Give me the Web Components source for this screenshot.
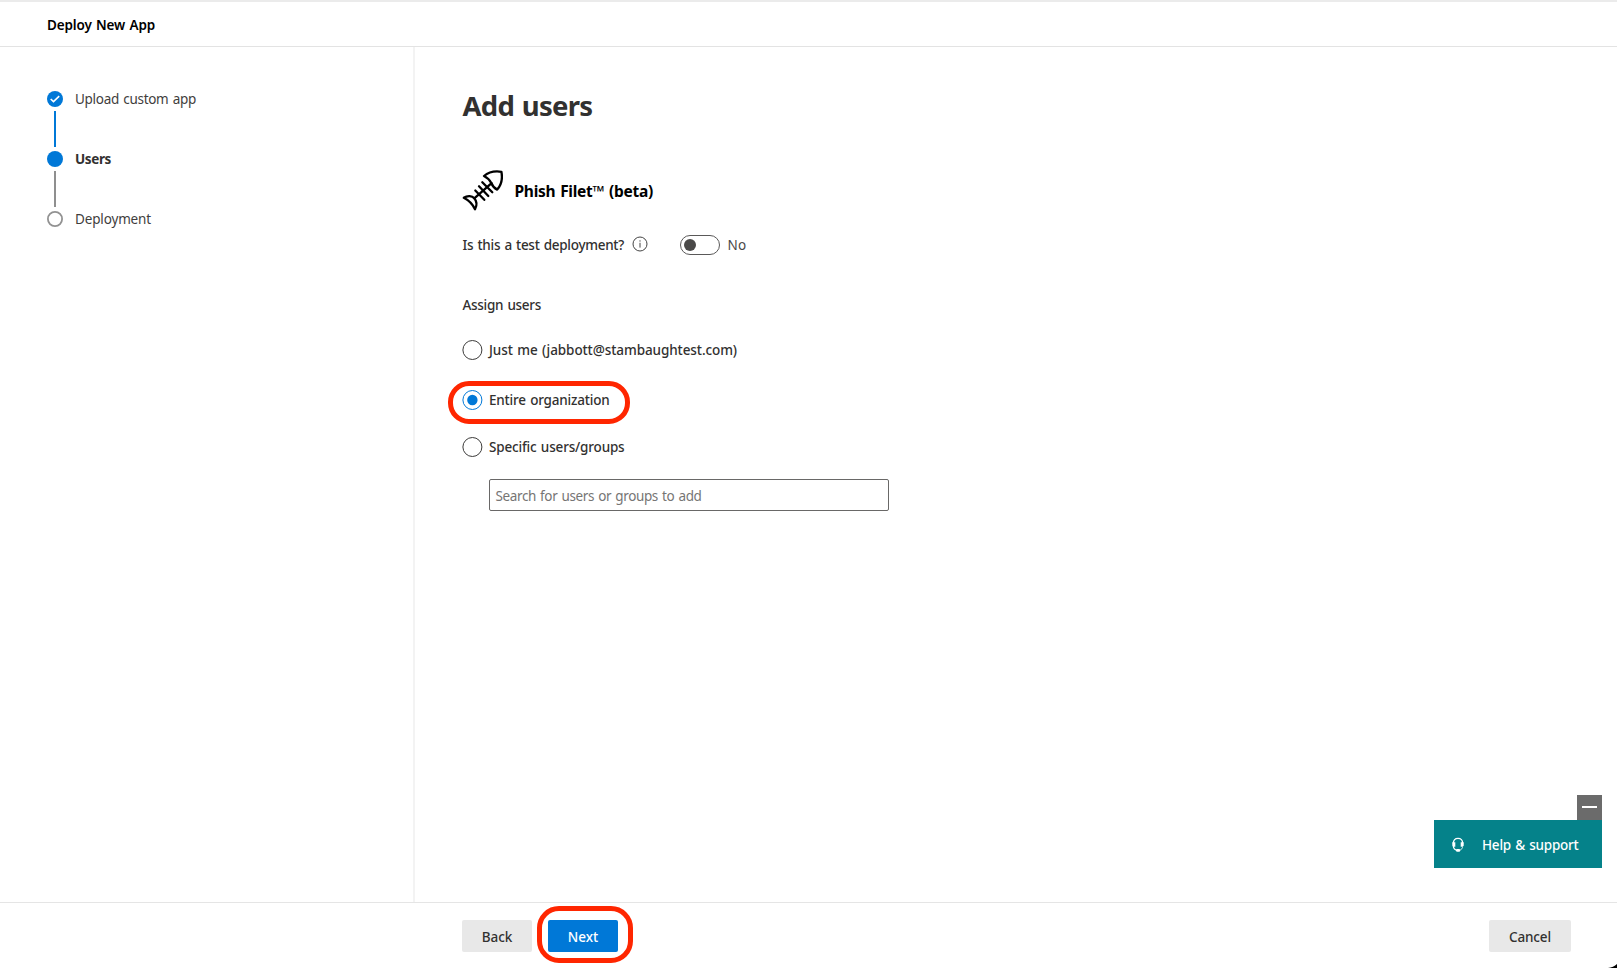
<!DOCTYPE html>
<html lang="en">
<head>
<meta charset="utf-8">
<title>Deploy New App</title>
<style>
html,body{margin:0;height:100%;overflow:hidden;background:#fff}
body{font-family:"Noto Sans","Open Sans",sans-serif;font-size:13.5px;color:#323130}
</style>
</head>
<body>
<deploy-page></deploy-page>
<script>
const define = (name, html, init) => customElements.define(name, class extends HTMLElement {
  connectedCallback() {
    if (this.shadowRoot) return;
    const t = document.createElement('template');
    t.innerHTML = html;
    this.attachShadow({mode: 'open'}).append(t.content.cloneNode(true));
    if (init) init(this, this.shadowRoot);
  }
});

/* A one-line label whose tracking is adjusted to fill the given width. */
define('ui-text', `<style>
:host{display:block;white-space:nowrap;line-height:20px;height:20px;flex:none}
span{display:inline-block;word-spacing:1px}
</style><span><slot></slot></span>`, (host, root) => {
  const w = parseFloat(host.getAttribute('w'));
  const s = root.querySelector('span');
  host.style.width = w + 'px';
  const n = host.textContent.length;
  s.style.letterSpacing = ((w - s.getBoundingClientRect().width) / n) + 'px';
});

define('app-header', `<style>
:host{display:flex;align-items:center;box-sizing:border-box;height:47px;padding:1px 47px 0 47px;border-top:2px solid #ebebeb;border-bottom:1px solid #e3e3e3;color:#000;font-weight:600}
</style><ui-text w="108">Deploy New App</ui-text>`);

define('step-item', `<style>
:host{display:grid;grid-template-columns:16px auto;column-gap:12px;height:60px;color:#3f3e3d;justify-content:start}
.mark{display:flex;flex-direction:column;align-items:center;gap:4px}
svg{display:block;width:16px;height:16px;flex:none}
i{width:2px;height:36px;background:#8f8f8f}
:host([state=done]) i{background:#0078d7}
:host([state=next]) i{display:none}
:host([state=current]){font-weight:700;color:#323130}
.label{margin-top:-2px}
</style><div class="mark"><svg viewBox="0 0 16 16"></svg><i></i></div><div class="label"><slot></slot></div>`, (host, root) => {
  const st = host.getAttribute('state');
  root.querySelector('svg').innerHTML = st === 'next'
    ? '<circle cx="8" cy="8" r="7.1" fill="#fff" stroke="#929292" stroke-width="1.8"/>'
    : '<circle cx="8" cy="8" r="8" fill="#0078d7"/>' + (st === 'done' ? '<path d="M3.7 8 6.5 10.6 12.2 5.2" fill="none" stroke="#fff" stroke-width="1.6"/>' : '');
});

define('step-list', `<style>
:host{display:block;box-sizing:border-box;width:415px;flex:none;padding:44px 0 0 47px;border-right:2px solid #f3f3f3}
</style>
<step-item state="done"><ui-text w="121">Upload custom app</ui-text></step-item>
<step-item state="current"><ui-text w="36">Users</ui-text></step-item>
<step-item state="next"><ui-text w="76">Deployment</ui-text></step-item>`);

define('radio-option', `<style>
:host{display:flex;align-items:center;gap:6px;height:20px;font-weight:550;position:relative}
svg{width:21px;height:20px;flex:none;display:block}
</style><svg viewBox="0 0 21 20"></svg><slot></slot>`, (host, root) => {
  root.querySelector('svg').innerHTML = host.hasAttribute('checked')
    ? '<circle cx="10.4" cy="10" r="9.5" fill="#fff" stroke="#0078d7"/><circle cx="10.4" cy="10" r="5.2" fill="#0078d7"/>'
    : '<circle cx="10.4" cy="10" r="9.5" fill="#fff" stroke="#3c3b3a"/>';
});

define('mark-ring', `<style>
:host{display:block;position:absolute;box-sizing:border-box;border:5px solid #ff2600;pointer-events:none}
</style>`);

define('toggle-switch', `<style>
:host{display:flex;align-items:center;gap:8px;color:#4a4948}
.t{box-sizing:border-box;width:40px;height:20px;border:1px solid #5a5959;border-radius:10px;padding:3px;flex:none}
.t b{display:block;width:12px;height:12px;border-radius:50%;background:#4a4948}
</style><span class="t"><b></b></span><slot></slot>`);

define('fish-icon', `<style>:host{display:block;width:41px;height:41px;flex:none}svg{display:block}</style>
<svg width="41" height="41" viewBox="0 0 41 41" fill="none" stroke="#000" stroke-width="2.3" stroke-linejoin="round" stroke-linecap="round">
<path d="M22 6C27 1.7 34 1 39.4 1.8 40.6 8 39.3 15 35.2 19.6Q31 17.5 29.3 13 27 8.5 22 6Z"/>
<path d="M1.8 27.8C5.5 25.2 10 25.6 12.3 28.3 15 31.5 15 35.5 13 39.3 11 34.8 6.5 30.2 1.8 27.8Z"/>
<path d="M12.3 28.3 29.6 13.2M13.3 20.5 22.3 29.8M17 16.3 26.3 26M20.3 12.2 30.3 22.3"/></svg>`);

define('users-form', `<style>
:host{display:block;flex:1;padding:38px 0 0 47px}
h1{margin:0;height:42px;font-size:27.5px;font-weight:700}
h1 ui-text{line-height:42px;height:42px;margin-left:.5px}
.app{display:flex;gap:11.5px;height:41px;margin-top:42.5px;color:#000;font-weight:700;font-size:15.5px}
.app ui-text{margin-top:11.5px}
.q{display:flex;align-items:center;height:20px;margin-top:24px;padding-left:.5px;font-weight:550}
.q svg{display:block;margin:-1px 32px 0 7.5px}
.q toggle-switch{font-weight:400}
.a{margin:40px 0 0 .5px;font-weight:550}
.r1{margin-top:25px}.r2{margin-top:30px}.r3{margin-top:27px}
.r2 mark-ring{left:-14px;top:-9px;width:182px;height:43px;border-radius:21px}
.in{box-sizing:border-box;width:400px;height:32px;margin:22.5px 0 0 26.5px;border:1px solid #696867;border-radius:2px;padding:6px 6px;color:#767574}
</style>
<h1><ui-text w="130">Add users</ui-text></h1>
<div class="app"><fish-icon></fish-icon><ui-text w="138.5">Phish Filet™ (beta)</ui-text></div>
<div class="q"><ui-text w="161.5">Is this a test deployment?</ui-text><svg width="16" height="16" viewBox="0 0 16 16"><circle cx="8" cy="8" r="7" fill="none" stroke="#444"/><path d="M8 6.8V11.6M8 4.3v1.3" stroke="#444" fill="none"/></svg><toggle-switch><ui-text w="19">No</ui-text></toggle-switch></div>
<div class="a"><ui-text w="78.5">Assign users</ui-text></div>
<radio-option class="r1"><ui-text w="248">Just me (jabbott@stambaughtest.com)</ui-text></radio-option>
<radio-option class="r2" checked><ui-text w="120.5">Entire organization</ui-text><mark-ring></mark-ring></radio-option>
<radio-option class="r3"><ui-text w="135.5">Specific users/groups</ui-text></radio-option>
<div class="in"><ui-text w="206">Search for users or groups to add</ui-text></div>`);

define('push-button', `<style>
:host{display:flex;align-items:center;justify-content:center;position:relative;box-sizing:border-box;width:70px;height:32px;padding-top:1px;border-radius:2px;background:#e8e8e8;color:#323130;font-weight:550}
:host([primary]){background:#0078d7;color:#fff}
</style><slot></slot>`);

define('app-footer', `<style>
:host{display:flex;align-items:flex-start;box-sizing:border-box;height:66px;padding:17px 46px 0 462px;border-top:1px solid #e5e5e5;position:relative}
.p{margin-left:16px}.c{margin-left:auto;width:82px}
mark-ring{left:-11px;top:-14px;width:96px;height:57px;border-radius:22px}
.corner{position:absolute;right:0;bottom:0;display:block}
</style>
<push-button><ui-text w="30.5">Back</ui-text></push-button>
<push-button primary class="p"><ui-text w="30.5">Next</ui-text><mark-ring></mark-ring></push-button>
<push-button class="c"><ui-text w="42">Cancel</ui-text></push-button>
<svg class="corner" width="9" height="4" viewBox="0 0 9 4"><path d="M0 4Q5.5 3.6 9 0V4Z" fill="#000"/></svg>`);

define('help-widget', `<style>
:host{display:flex;flex-direction:column;align-items:flex-end;position:absolute;right:15px;bottom:100px;width:168px;color:#fff}
.m{width:25px;height:25px;background:#6b6b6b;display:block}
.h{display:flex;align-items:center;box-sizing:border-box;width:168px;height:48px;background:#05828a;padding:1px 0 0 17px;gap:17px;font-weight:500}
.h svg{display:block}
</style>
<svg class="m" viewBox="0 0 25 25"><path d="M5 12h15" stroke="#fff" stroke-width="2"/></svg>
<div class="h"><svg width="14" height="16" viewBox="0 0 14 16" fill="none" stroke="#fff" stroke-width="1.3"><path d="M2.3 6.5C2.3 3 4.2 1.4 7 1.4S11.7 3 11.7 6.5M2.3 9C2.5 11.4 3.7 12.8 6 13.3"/><path d="M1.3 5.2H4.3V9.8H2.6L1.3 8.8ZM12.7 5.2H9.7V9.8H11.4L12.7 8.8Z" fill="#fff" stroke="none"/><path d="M11.6 9.5C11.5 11.3 10.6 12.6 8.8 13.2" stroke-width=".8"/><rect x="5" y="12" width="4.2" height="2.7" rx="1.2" fill="#fff" stroke="none"/></svg><ui-text w="96.5">Help &amp; support</ui-text></div>`);

define('deploy-page', `<style>
:host{display:flex;flex-direction:column;height:100vh;position:relative}
main{display:flex;flex:1;min-height:0}
</style>
<app-header></app-header>
<main><step-list></step-list><users-form></users-form></main>
<app-footer></app-footer>
<help-widget></help-widget>`);
</script>
</body>
</html>
